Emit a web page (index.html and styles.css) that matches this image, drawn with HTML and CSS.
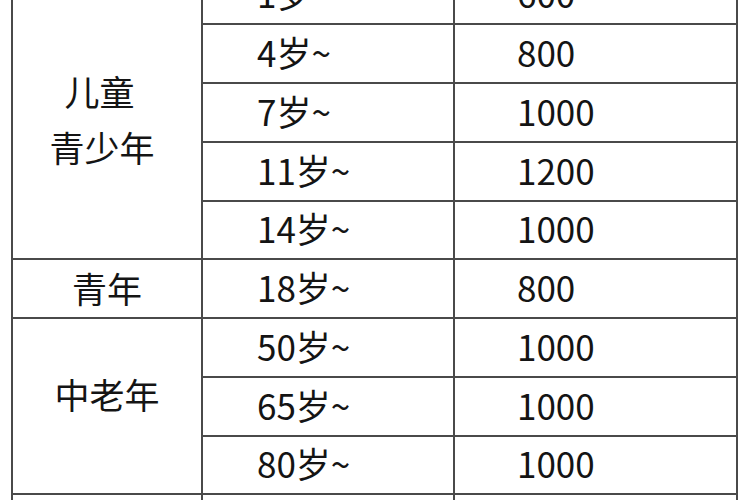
FILE: index.html
```html
<!DOCTYPE html>
<html lang="zh">
<head>
<meta charset="utf-8">
<link rel="stylesheet" href="styles.css">
</head>
<body>
<table class="intake">
  <colgroup>
    <col class="c-group">
    <col class="c-age">
    <col class="c-val">
  </colgroup>
  <tbody>
    <tr class="r-a">
      <td class="group g-kids" rowspan="5"><span class="stack"><span class="first">儿童</span><br>青少年</span></td>
      <td class="age">1岁~</td>
      <td class="val">600</td>
    </tr>
    <tr class="r-a"><td class="age">4岁~</td><td class="val">800</td></tr>
    <tr class="r-a"><td class="age">7岁~</td><td class="val">1000</td></tr>
    <tr class="r-a"><td class="age">11岁~</td><td class="val">1200</td></tr>
    <tr class="r-b"><td class="age">14岁~</td><td class="val">1000</td></tr>
    <tr class="r-a">
      <td class="group">青年</td>
      <td class="age">18岁~</td>
      <td class="val">800</td>
    </tr>
    <tr class="r-a">
      <td class="group g-old" rowspan="3">中老年</td>
      <td class="age">50岁~</td>
      <td class="val">1000</td>
    </tr>
    <tr class="r-a"><td class="age">65岁~</td><td class="val">1000</td></tr>
    <tr class="r-b"><td class="age">80岁~</td><td class="val">1000</td></tr>
    <tr class="r-a">
      <td class="group">孕妇</td>
      <td class="age">孕早期</td>
      <td class="val">800</td>
    </tr>
  </tbody>
</table>
</body>
</html>
```

FILE: styles.css
```css
html, body {
  margin: 0;
  padding: 0;
  background: #ffffff;
  overflow: hidden;
}

body {
  font-family: "Noto Sans CJK SC", "Noto Sans", sans-serif;
  color: #141414;
}

.intake {
  border-collapse: collapse;
  margin: -36px 0 0 11px;
  table-layout: fixed;
  width: 727px;
  font-size: 35px;
  line-height: 1;
}

.c-group { width: 190px; }
.c-age { width: 252px; }
.c-val { width: 283px; }

.intake td {
  border: 2px solid #4a4a4a;
  padding: 0;
  vertical-align: middle;
  white-space: nowrap;
}

.r-a td { height: 52px; }
.r-b td { height: 51px; }

.group {
  text-align: center;
  padding-bottom: 2px !important;
}

.g-kids {
  padding-top: 13px !important;
  padding-bottom: 0 !important;
}

.g-old {
  padding-bottom: 26px !important;
}

.stack {
  display: inline-block;
  text-align: left;
  line-height: 56px;
  padding-right: 10px;
}

.first {
  margin-left: 15px;
}

.age {
  padding-left: 54px !important;
  padding-bottom: 5px !important;
}

.val {
  padding-left: 62px !important;
  padding-bottom: 5px !important;
}
```
